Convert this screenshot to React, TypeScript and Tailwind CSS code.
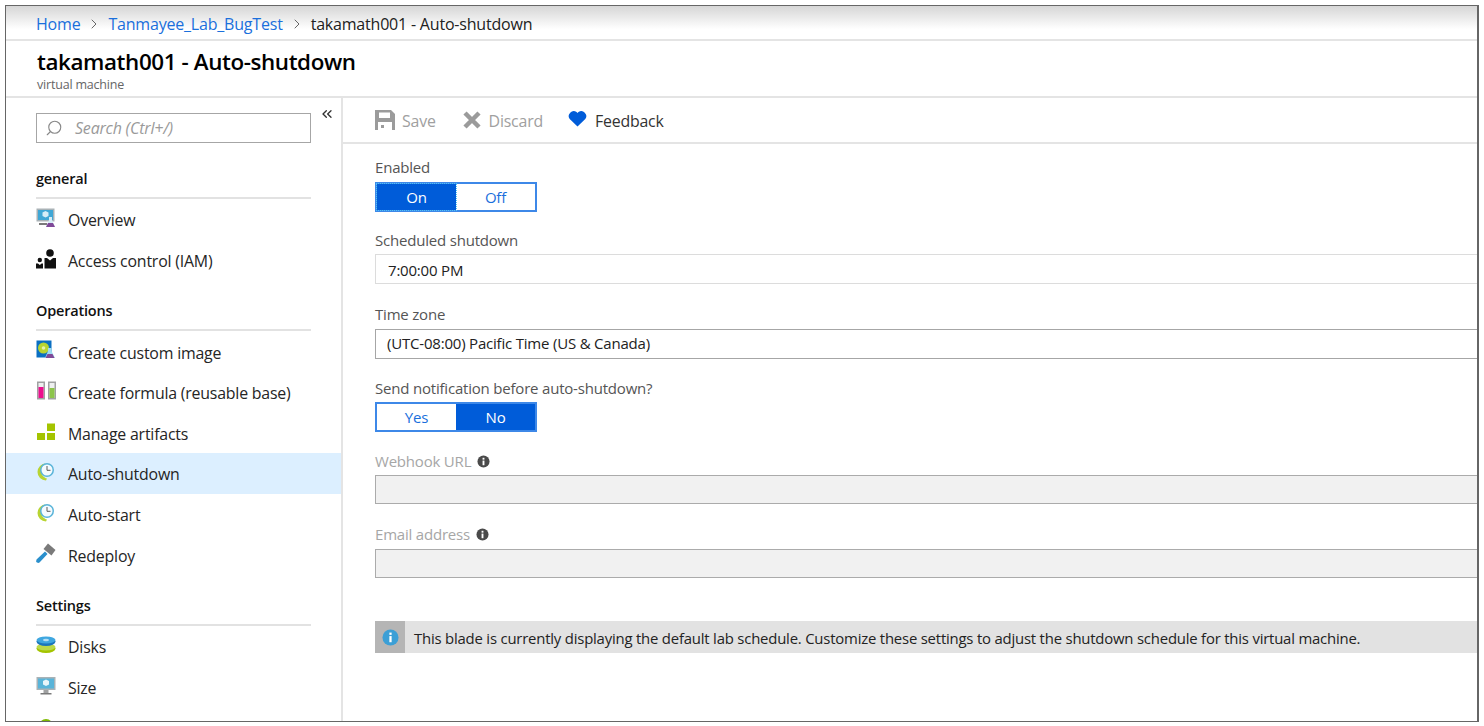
import React from 'react';
import { ChevronRight, ChevronsLeft, Search } from 'lucide-react';

const MonitorIcon = () => (
  <svg viewBox="0 0 20 20" className="w-5 h-5">
    <rect x="0.5" y="1" width="19" height="13" fill="#a9b2b6" />
    <rect x="2" y="2.5" width="16" height="10" fill="#59b4d9" />
    <path d="M10 3.5l3 1.5v3.5l-3 1.5-3-1.5V5z" fill="#e8f5fa" />
    <rect x="7.5" y="14" width="5" height="3" fill="#a0a1a2" />
    <rect x="4.5" y="17" width="11" height="1.5" fill="#7a7a7a" />
  </svg>
);

const OverviewIcon = () => (
  <svg viewBox="0 0 20 20" className="w-5 h-5">
    <rect x="0.5" y="0.5" width="18" height="13" fill="#a9b2b6" />
    <rect x="2" y="2" width="15" height="10" fill="#3fa7d6" />
    <path d="M9.5 3l3 1.500v3.500l-3 1.500-3-1.500V4.500z" fill="#d5edf7" />
    <rect x="3" y="15" width="8" height="2" fill="#7a7a7a" />
    <path d="M13 9h3v3l3 7h-9l3-7z" fill="#d5edf7" />
    <path d="M12 15h5l2 4h-9z" fill="#804998" />
  </svg>
);

const AccessIcon = () => (
  <svg viewBox="0 0 20 20" className="w-5 h-5">
    <circle cx="14" cy="4" r="3.800" fill="#111" />
    <path d="M8.500 9h2.500l3 2.500 3-2.500h3v10.500H8.500z" fill="#111" />
    <circle cx="3.800" cy="11" r="2.200" fill="#111" />
    <path d="M0 14.500h2l1.800 1.500 1.800-1.500h1.400v5H0z" fill="#111" />
  </svg>
);

const ImageIcon = () => (
  <svg viewBox="0 0 20 20" className="w-5 h-5">
    <rect x="0.500" y="0.500" width="15" height="17" fill="#0a6fc2" />
    <circle cx="7.500" cy="8" r="5.500" fill="#b8d432" />
    <circle cx="7.500" cy="8" r="1.800" fill="#e6f0b0" />
    <path d="M12 8h3.500v3l3.500 7h-10l3-7z" fill="#9fdcf2" />
    <path d="M11.500 14h5l2 4h-9z" fill="#804998" />
  </svg>
);

const TubesIcon = () => (
  <svg viewBox="0 0 20 20" className="w-5 h-5">
    <path d="M1 0.500h8v18H1zM12 0.500h8v18h-8z" fill="#a0a1a2" />
    <rect x="2.500" y="2" width="5" height="15" fill="#eef0f0" />
    <rect x="13.500" y="2" width="5" height="15" fill="#eef0f0" />
    <rect x="2.500" y="6" width="5" height="11" fill="#ec0e8d" />
    <rect x="13.500" y="7" width="5" height="10" fill="#8cc44a" />
  </svg>
);

const ArtifactsIcon = () => (
  <svg viewBox="0 0 20 20" className="w-5 h-5">
    <rect x="1" y="11" width="8" height="7" fill="#a4c400" />
    <rect x="11" y="11" width="8" height="7" fill="#a4c400" />
    <rect x="11" y="1.500" width="8" height="7.500" fill="#a4c400" />
  </svg>
);

const ClockIcon = () => (
  <svg viewBox="0 0 20 20" className="w-5 h-5">
    <path d="M10 18.500A8.500 8.500 0 0 1 10 1.500c-3 1-5 4-5 7.500s3 7 6 7.500z" fill="#b8d432" />
    <circle cx="11" cy="8" r="7" fill="#59b4d9" />
    <circle cx="11" cy="8" r="5.500" fill="#f4fbff" />
    <path d="M11 4v4.300h3.500" fill="none" stroke="#5a5a5a" strokeWidth="1" />
  </svg>
);

const HammerIcon = () => (
  <svg viewBox="0 0 20 20" className="w-5 h-5">
    <path d="M0.500 16.500L9 8.500l2.500 2.500-8 8.500q-1 .8-2.500 0t-.5-2.500z" fill="#2a8fcc" />
    <path d="M7.500 6L12 0.500l7.500 6.500-4 5.500z" fill="#7a7a7a" />
  </svg>
);

const DisksIcon = () => (
  <svg viewBox="0 0 20 20" className="w-5 h-5">
    <ellipse cx="10" cy="13.500" rx="9.500" ry="4.500" fill="#a4c400" />
    <ellipse cx="10" cy="12" rx="9.500" ry="3.500" fill="#bcd94a" />
    <ellipse cx="10" cy="6.500" rx="9.500" ry="4.500" fill="#1b75bb" />
    <ellipse cx="10" cy="5" rx="9.500" ry="3.500" fill="#3fa7e0" />
    <ellipse cx="10" cy="5" rx="3" ry="1.200" fill="#b5def4" />
  </svg>
);

const GreenDot = () => (
  <svg viewBox="0 0 20 20" className="w-5 h-5">
    <circle cx="10" cy="10" r="7" fill="#7fba00" />
  </svg>
);

const InfoDot = () => (
  <svg viewBox="0 0 14 14" className="w-[13px] h-[13px]">
    <circle cx="7" cy="7" r="6.500" fill="#4a4a4a" />
    <rect x="6" y="6" width="2" height="5" fill="#fff" />
    <rect x="6" y="3" width="2" height="2" fill="#fff" />
  </svg>
);

const NavItem = ({ icon, label, active }: { icon: React.ReactNode; label: string; active?: boolean }) => (
  <div className={`h-[40.6px] flex items-center pl-[30px] gap-3 ${active ? 'bg-[#dcefff]' : ''}`}>
    <span className="w-5 h-5 -mt-[2px] shrink-0">{icon}</span>
    <span className="text-[#252525] text-[15.9px] mt-[4px]">{label}</span>
  </div>
);

const SectionHead = ({ label, className }: { label: string; className: string }) => (
  <div className={`mx-[30px] border-b-2 border-[#e2e2e2] h-[31px] pt-[1px] font-semibold text-[14.5px] text-[#111] leading-[20px] ${className}`}>
    {label}
  </div>
);

const Toggle = ({ left, right, on }: { left: string; right: string; on: 'left' | 'right' }) => (
  <div className="flex w-[162px] h-[30px] border-2 border-[#3d88e8] text-[15px]">
    <div className={`flex-1 flex items-center justify-center ${on === 'left' ? 'bg-[#005cd9] text-white outline-1 outline-dotted outline-[#4fc3f7]' : 'text-[#1a6fdc]'}`}>{left}</div>
    <div className={`flex-1 flex items-center justify-center ${on === 'right' ? 'bg-[#005cd9] text-white' : 'text-[#1a6fdc]'}`}>{right}</div>
  </div>
);

const App = () => {
  return (
    <div className="w-[1484px] h-[726px] bg-white pl-[5px] pt-[5px] overflow-hidden text-[15.5px] font-['Open_Sans','Noto_Sans',sans-serif] tracking-[-0.2px]">
      <div className="w-[1474px] h-[717px] border border-[#666] border-r-2 flex flex-col overflow-hidden">
        <div className="h-[35px] shrink-0 border-b-2 border-[#e4e4e4] bg-gradient-to-b from-[#d6d6d6] to-white to-70% flex items-center pl-[30px] pt-[3px] text-[16px]">
          <span className="text-[#1a6fdc]">Home</span>
          <ChevronRight className="w-4 h-4 text-[#666] mx-[6px]" strokeWidth={1.5} />
          <span className="text-[#1a6fdc]">Tanmayee_Lab_BugTest</span>
          <ChevronRight className="w-4 h-4 text-[#666] mx-[6px]" strokeWidth={1.5} />
          <span className="text-[#222]">takamath001 - Auto-shutdown</span>
        </div>

        <div className="h-[57px] shrink-0 border-b-2 border-[#e4e4e4] pl-[31px] pt-[5px]">
          <div className="text-[22.4px] leading-[31px] font-semibold tracking-[-0.4px] text-black">takamath001 - Auto-shutdown</div>
          <div className="text-[12.5px] leading-[16px] text-[#666]">virtual machine</div>
        </div>

        <div className="flex-1 flex min-h-0">
          <aside className="w-[337px] shrink-0 border-r-2 border-[#e4e4e4] overflow-hidden">
            <div className="flex items-start pt-[15px] pl-[30px]">
              <div className="w-[275px] h-[30px] border border-[#a6a6a6] flex items-center pl-2 gap-[12px] italic text-[16px] text-[#9a9a9a]">
                <Search className="w-[18px] h-[18px] -scale-x-100 text-[#888]" strokeWidth={1.5} />
                Search (Ctrl+/)
              </div>
              <ChevronsLeft className="w-4 h-4 ml-2 -mt-[7px] text-[#333]" strokeWidth={2} />
            </div>
            <SectionHead label="general" className="mt-[25px]" />
            <NavItem icon={<OverviewIcon />} label="Overview" />
            <NavItem icon={<AccessIcon />} label="Access control (IAM)" />
            <SectionHead label="Operations" className="mt-[20px]" />
            <NavItem icon={<ImageIcon />} label="Create custom image" />
            <NavItem icon={<TubesIcon />} label="Create formula (reusable base)" />
            <NavItem icon={<ArtifactsIcon />} label="Manage artifacts" />
            <NavItem icon={<ClockIcon />} label="Auto-shutdown" active />
            <NavItem icon={<ClockIcon />} label="Auto-start" />
            <NavItem icon={<HammerIcon />} label="Redeploy" />
            <SectionHead label="Settings" className="mt-[20px]" />
            <NavItem icon={<DisksIcon />} label="Disks" />
            <NavItem icon={<MonitorIcon />} label="Size" />
            <NavItem icon={<GreenDot />} label="" />
          </aside>

          <main className="flex-1 min-w-0">
            <div className="h-[46px] border-b-2 border-[#e4e4e4] flex items-center pl-[32px] text-[15.9px]">
              <div className="flex items-center gap-[7px] text-[#a0a0a0] mr-[26px]">
                <svg viewBox="0 0 20 20" className="w-5 h-5">
                  <path d="M0 0h16l4 4v16H0z" fill="#9b9b9b" />
                  <rect x="4" y="2.500" width="11" height="5.500" fill="#fff" />
                  <rect x="3" y="12" width="14" height="8" fill="#fff" />
                  <rect x="6" y="15" width="3" height="3" fill="#9b9b9b" />
                </svg>
                <span className="mt-[3px]">Save</span>
              </div>
              <div className="flex items-center gap-[7px] text-[#a0a0a0] mr-[25px]">
                <svg viewBox="0 0 20 20" className="w-5 h-5">
                  <path d="M3 3l14 14M17 3L3 17" stroke="#9b9b9b" strokeWidth="4.500" />
                </svg>
                <span className="mt-[3px]">Discard</span>
              </div>
              <div className="flex items-center gap-2 text-[#333]">
                <svg viewBox="0 0 20 18" className="w-[19px] h-[18px] -mt-[2px]">
                  <path d="M10 17L1.800 9A5.200 5.200 0 0 1 9 1.700L10 2.800l1-1.100A5.200 5.200 0 0 1 18.200 9z" fill="#005cd9" />
                </svg>
                <span className="mt-[3px]">Feedback</span>
              </div>
            </div>

            <div className="pl-[32px]">
              <div className="mt-[13px] h-[20px] leading-[20px] text-[#555] text-[15px]">Enabled</div>
              <div className="mt-[5px]"><Toggle left="On" right="Off" on="left" /></div>

              <div className="mt-[18px] h-[20px] leading-[20px] text-[#555] text-[15px]">Scheduled shutdown</div>
              <div className="mt-[4px] h-[30px] border border-r-0 border-[#dcdcdc] flex items-center pl-3 pt-[2px] text-[#222] text-[15px]">7:00:00 PM</div>

              <div className="mt-[20px] h-[20px] leading-[20px] text-[#555] text-[15px]">Time zone</div>
              <div className="mt-[5px] h-[30px] border border-r-0 border-[#a6a6a6] flex items-center pl-[11px] pb-[2px] text-[#222] text-[15px]">(UTC-08:00) Pacific Time (US &amp; Canada)</div>

              <div className="mt-[19px] h-[20px] leading-[20px] text-[#555] text-[15px]">Send notification before auto-shutdown?</div>
              <div className="mt-[4px]"><Toggle left="Yes" right="No" on="right" /></div>

              <div className="mt-[19px] h-[20px] flex items-center gap-[6px] text-[#a6a6a6] text-[15px]">Webhook URL <InfoDot /></div>
              <div className="mt-[4px] h-[29px] border border-r-0 border-[#ababab] bg-[#f1f1f1]" />

              <div className="mt-[20px] h-[20px] flex items-center gap-[6px] text-[#a6a6a6] text-[15px]">Email address <InfoDot /></div>
              <div className="mt-[5px] h-[29px] border border-r-0 border-[#ababab] bg-[#f1f1f1]" />

              <div className="mt-[43px] h-[32px] bg-[#e2e2e2] flex items-center text-[14.9px] text-[#222]">
                <div className="w-[30px] h-full bg-[#b5b5b5] flex items-center justify-center mr-[9px]">
                  <svg viewBox="0 0 18 18" className="w-[17px] h-[17px]">
                    <circle cx="9" cy="9" r="8.500" fill="#3b9fd6" />
                    <rect x="7.800" y="7.500" width="2.400" height="6.500" fill="#fff" />
                    <rect x="7.800" y="3.800" width="2.400" height="2.400" fill="#fff" />
                  </svg>
                </div>
                <span className="mt-[2px]">This blade is currently displaying the default lab schedule. Customize these settings to adjust the shutdown schedule for this virtual machine.</span>
              </div>
            </div>
          </main>
        </div>
      </div>
    </div>
  );
};

export default App;
